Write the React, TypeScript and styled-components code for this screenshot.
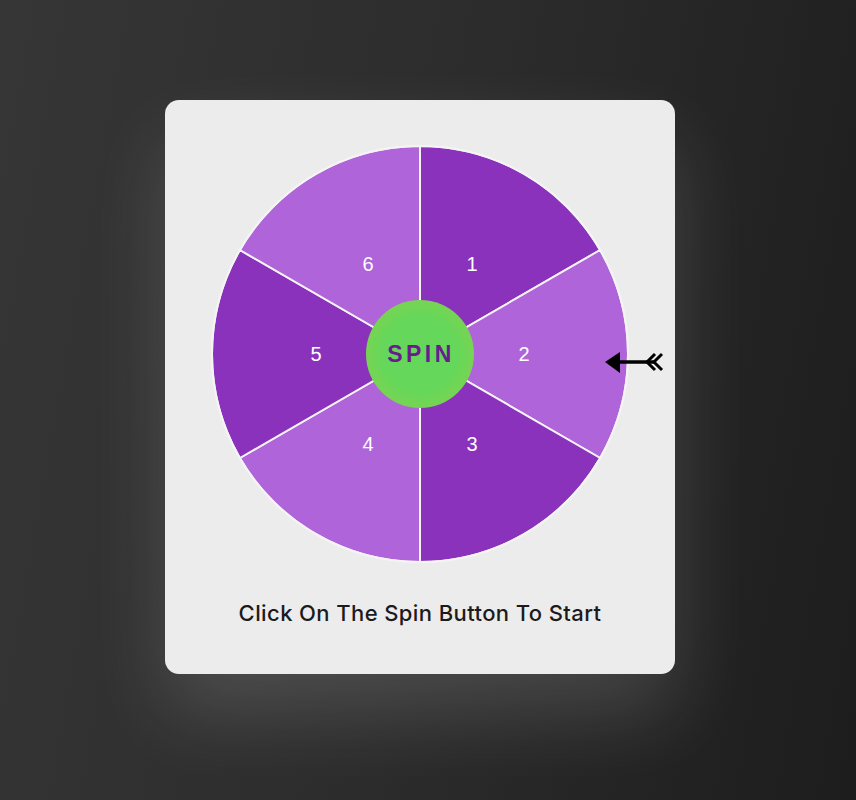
import styled, { createGlobalStyle } from 'styled-components';

const GlobalStyle = createGlobalStyle`
  * { box-sizing: border-box; }
  html, body {
    margin: 0;
    padding: 0;
  }
  body {
    min-height: 100vh;
    background: linear-gradient(100deg, #363636 0%, #2c2c2c 50%, #1e1d1d 100%);
    font-family: 'Liberation Sans', Arial, sans-serif;
  }
`;

const Page = styled.div`
  min-height: 800px;
  display: flex;
  padding-top: 100px;
  padding-left: 165px;
`;

const Card = styled.div`
  width: 510px;
  height: 574px;
  background: #ececec;
  border-radius: 14px;
  padding: 45px 46px 0;
  display: flex;
  flex-direction: column;
  align-items: center;
  box-shadow: 0 40px 80px rgba(255, 255, 255, 0.15);
`;

const WheelBox = styled.div`
  position: relative;
  width: 418px;
  height: 418px;
`;

const SpinButton = styled.button`
  position: absolute;
  left: 155px;
  top: 155px;
  width: 108px;
  height: 108px;
  border: none;
  border-radius: 50%;
  background: radial-gradient(circle, #63d85a 0%, #66d75a 50%, #8fd048 100%);
  color: #6a1c8c;
  font-family: 'Liberation Sans', Arial, sans-serif;
  font-weight: 700;
  font-size: 23px;
  letter-spacing: 3.5px;
  padding: 0 0 0 2px;
  cursor: pointer;
`;

const Pointer = styled.svg`
  position: absolute;
  left: 393px;
  top: 205px;
`;

const Caption = styled.p`
  margin: 35px 0 0;
  font-family: 'Inter', 'Open Sans', sans-serif;
  font-size: 22px;
  font-weight: 500;
  letter-spacing: 0.4px;
  line-height: 30px;
  color: #1b1b1b;
`;

const segments = [1, 2, 3, 4, 5, 6];
const C = 209;
const R = 208;

const polar = (deg: number, r: number) => {
  const a = (deg * Math.PI) / 180;
  return [C + r * Math.cos(a), C + r * Math.sin(a)];
};

const Wheel = () => (
  <svg width="418" height="418" viewBox="0 0 418 418">
    {segments.map((n, i) => {
      const start = -90 + 60 * i;
      const end = start + 60;
      const [x1, y1] = polar(start, R);
      const [x2, y2] = polar(end, R);
      return (
        <path
          key={n}
          d={`M${C},${C} L${x1},${y1} A${R},${R} 0 0 1 ${x2},${y2} Z`}
          fill={n % 2 ? '#8a32bc' : '#b064d9'}
          stroke="#f4f4f4"
          strokeWidth="2"
        />
      );
    })}
    <circle cx={C} cy={C} r={R} fill="none" stroke="#f4f4f4" strokeWidth="2" />
    {segments.map((n, i) => {
      const [x, y] = polar(-60 + 60 * i, 104);
      return (
        <text
          key={n}
          x={x}
          y={y + 7}
          textAnchor="middle"
          fill="#ffffff"
          fontFamily="'Liberation Sans', Arial, sans-serif"
          fontSize="20"
        >
          {n}
        </text>
      );
    })}
  </svg>
);

export default function App() {
  return (
    <>
      <GlobalStyle />
      <Page>
        <Card>
          <WheelBox>
            <Wheel />
            <SpinButton>SPIN</SpinButton>
            <Pointer width="62" height="24" viewBox="0 0 62 24">
              <polygon points="1,12 16,2 16,23" fill="#000" />
              <line x1="15" y1="12" x2="50" y2="12" stroke="#000" strokeWidth="3.5" />
              <polyline points="51,4 43,12 51,20" fill="none" stroke="#000" strokeWidth="3" />
              <polyline points="58,4 50,12 58,20" fill="none" stroke="#000" strokeWidth="3" />
            </Pointer>
          </WheelBox>
          <Caption>Click On The Spin Button To Start</Caption>
        </Card>
      </Page>
    </>
  );
}
